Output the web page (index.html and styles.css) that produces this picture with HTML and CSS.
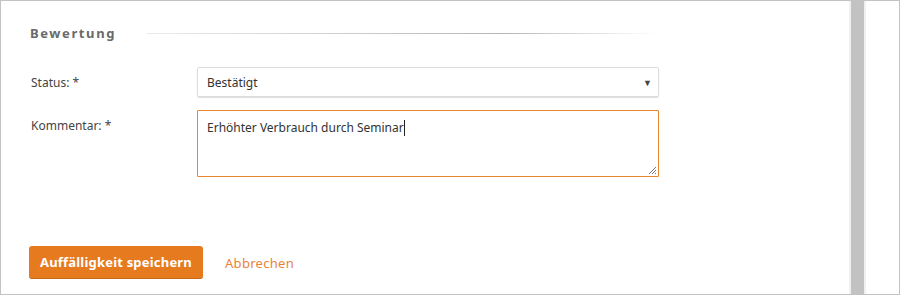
FILE: index.html
```html
<!DOCTYPE html>
<html lang="de">
<head>
  <meta charset="UTF-8">
  <title>Auffälligkeit bewerten</title>
  <link rel="stylesheet" href="styles.css">
</head>
<body>
  <div class="frame">
    <div class="content">
      <div class="section-title">
        <h2>Bewertung</h2>
        <span class="rule"></span>
      </div>

      <div class="row">
        <label>Status: *</label>
        <div class="select">
          <span>Bestätigt</span>
          <span class="arrow">▼</span>
        </div>
      </div>

      <div class="row">
        <label>Kommentar: *</label>
        <div class="textarea">
          Erhöhter Verbrauch durch Seminar<span class="caret"></span>
          <svg class="grip" width="9" height="9" viewBox="0 0 9 9">
            <path d="M8 1 L1 8 M8 4 L4 8 M8 7 L7 8" stroke="#777" stroke-width="1" fill="none"/>
          </svg>
        </div>
      </div>

      <div class="actions">
        <button>Auffälligkeit speichern</button>
        <a href="#">Abbrechen</a>
      </div>
    </div>
    <div class="scrollbar"></div>
  </div>
</body>
</html>
```

FILE: styles.css
```css
body {
  margin: 0;
  font-family: "Noto Sans", sans-serif;
  font-size: 12px;
  color: #333;
  background: #fff;
}
.frame {
  display: flex;
  width: 900px;
  height: 295px;
  box-sizing: border-box;
  border: 1px solid #c3c3c3;
  overflow: hidden;
}
.content {
  width: 848px;
  padding: 20px 0 0 28px;
  box-sizing: border-box;
}
.scrollbar {
  width: 13px;
  background: #c2c2c2;
  border-left: 2px solid #f0f0f0;
  border-right: 2px solid #f0f0f0;
}
.section-title {
  display: flex;
  align-items: center;
  height: 24px;
}
.section-title h2 {
  margin: 0 0 0 1px;
  font-size: 13px;
  font-weight: bold;
  letter-spacing: 1.6px;
  color: #6a6a6a;
}
.section-title .rule {
  margin-left: 31px;
  width: 510px;
  height: 1px;
  background: linear-gradient(to right, #ececec, #b5b5b5 70%, #fff);
}
.row {
  display: flex;
  margin-top: 13px;
}
.section-title + .row {
  margin-top: 22px;
}
.row label {
  width: 166px;
  padding-left: 2px;
  padding-top: 7px;
  color: #444;
}
.select {
  display: flex;
  align-items: center;
  justify-content: space-between;
  width: 462px;
  height: 30px;
  box-sizing: border-box;
  padding: 0 6px 0 9px;
  border: 1px solid #dcdcdc;
  border-radius: 2px;
  box-shadow: 0 1px 1px #ddd;
}
.select .arrow {
  font-size: 9px;
  color: #444;
}
.textarea {
  position: relative;
  width: 462px;
  height: 67px;
  box-sizing: border-box;
  padding: 8px 9px;
  border: 1px solid #e8872f;
  border-radius: 1px;
}
.caret {
  display: inline-block;
  width: 1px;
  height: 16px;
  background: #222;
  vertical-align: -4px;
}
.grip {
  position: absolute;
  right: 1px;
  bottom: 1px;
}
.actions {
  display: flex;
  align-items: center;
  margin-top: 69px;
}
.actions button {
  width: 174px;
  height: 33px;
  border: none;
  border-bottom: 1px solid #c86916;
  border-radius: 3px;
  background: #e67a1f;
  color: #fff;
  font-family: inherit;
  font-size: 13px;
  font-weight: bold;
  letter-spacing: 0.2px;
  cursor: pointer;
}
.actions a {
  margin-left: 22px;
  font-size: 13px;
  color: #e8833a;
  text-decoration: none;
  letter-spacing: 0.3px;
}
```
